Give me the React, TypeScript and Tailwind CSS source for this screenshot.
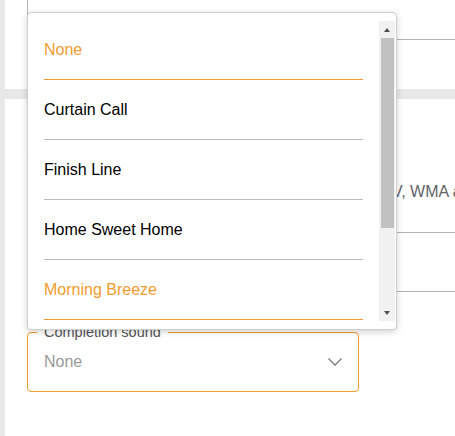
export default function App() {
  const items = [
    { label: "None", active: true },
    { label: "Curtain Call", active: false },
    { label: "Finish Line", active: false },
    { label: "Home Sweet Home", active: false },
    { label: "Morning Breeze", active: true },
  ];
  return (
    <div
      className="relative w-[455px] h-[436px] overflow-hidden bg-[#e8e8e8] pl-[5px] flex flex-col gap-[10px]"
      style={{ fontFamily: '"Liberation Sans", Arial, sans-serif' }}
    >
      {/* Card 1 */}
      <div className="h-[89px] shrink-0 bg-white pl-[22px] overflow-hidden">
        <div className="-mt-[21px] h-[61px] w-[480px] rounded border border-[#b3b3b3]" />
      </div>

      {/* Card 2 */}
      <div className="flex-1 bg-white pl-[22px] pt-[46px] overflow-hidden">
        <div className="h-[20px] leading-[20px] text-[17px] font-bold text-[#333] whitespace-nowrap">
          Alarm sound
        </div>
        <p className="mt-[17px] h-[20px] leading-[20px] text-[16px] text-[#5f6368] whitespace-nowrap">
          <span className="inline-block w-[365px] overflow-hidden align-top">
            Supported formats: MP3, AAC, OGG, WA
          </span>
          V, WMA and FLAC
        </p>
        <div className="mt-[30px] h-[60px] w-[480px] rounded border border-[#b3b3b3]" />
        <div className="relative mt-[40px] h-[60px] w-[332px] rounded border border-[#f29b2e]">
          <div className="absolute left-[9px] -top-[10px] bg-white px-[7px] text-[14.5px] leading-[18px] text-[#555] whitespace-nowrap">
            Completion sound
          </div>
          <div className="flex h-full items-center justify-between pl-[16px] pr-[15px]">
            <span className="text-[16px] text-[#9a9a9a]">None</span>
            <svg width="16" height="10" viewBox="0 0 16 10" fill="none">
              <polyline points="1.5,1.5 8,8 14.5,1.5" stroke="#7a7a7a" strokeWidth="1.3" />
            </svg>
          </div>
        </div>
      </div>

      {/* Dropdown menu */}
      <div className="absolute left-[27px] top-[12px] w-[370px] h-[318px] rounded bg-white border border-[#cfcfcf] shadow-[0_2px_6px_rgba(0,0,0,0.18)] pt-[7px] flex">
        <div className="w-[351px] h-[300px] overflow-hidden">
          {items.map((it) => (
            <div key={it.label} className="mx-[16px] h-[60px] flex items-center">
              <div
                className={
                  "w-full h-[60px] flex items-center border-b text-[16px] pt-[1px] " +
                  (it.active
                    ? "text-[#f29b2e] border-[#f29b2e]"
                    : "text-black border-[#bdbdbd]")
                }
              >
                {it.label}
              </div>
            </div>
          ))}
        </div>
        <div className="mt-[1px] w-[16px] h-[300px] bg-[#f1f1f1] flex flex-col">
          <div className="h-[17px] flex items-center justify-center">
            <div className="w-0 h-0 border-l-[3.5px] border-r-[3.5px] border-b-[4px] border-l-transparent border-r-transparent border-b-[#505050]" />
          </div>
          <div className="ml-[2px] w-[13px] h-[190px] bg-[#c1c1c1]" />
          <div className="flex-1" />
          <div className="h-[17px] flex items-center justify-center">
            <div className="w-0 h-0 border-l-[3.5px] border-r-[3.5px] border-t-[4px] border-l-transparent border-r-transparent border-t-[#505050]" />
          </div>
        </div>
      </div>
    </div>
  );
}
